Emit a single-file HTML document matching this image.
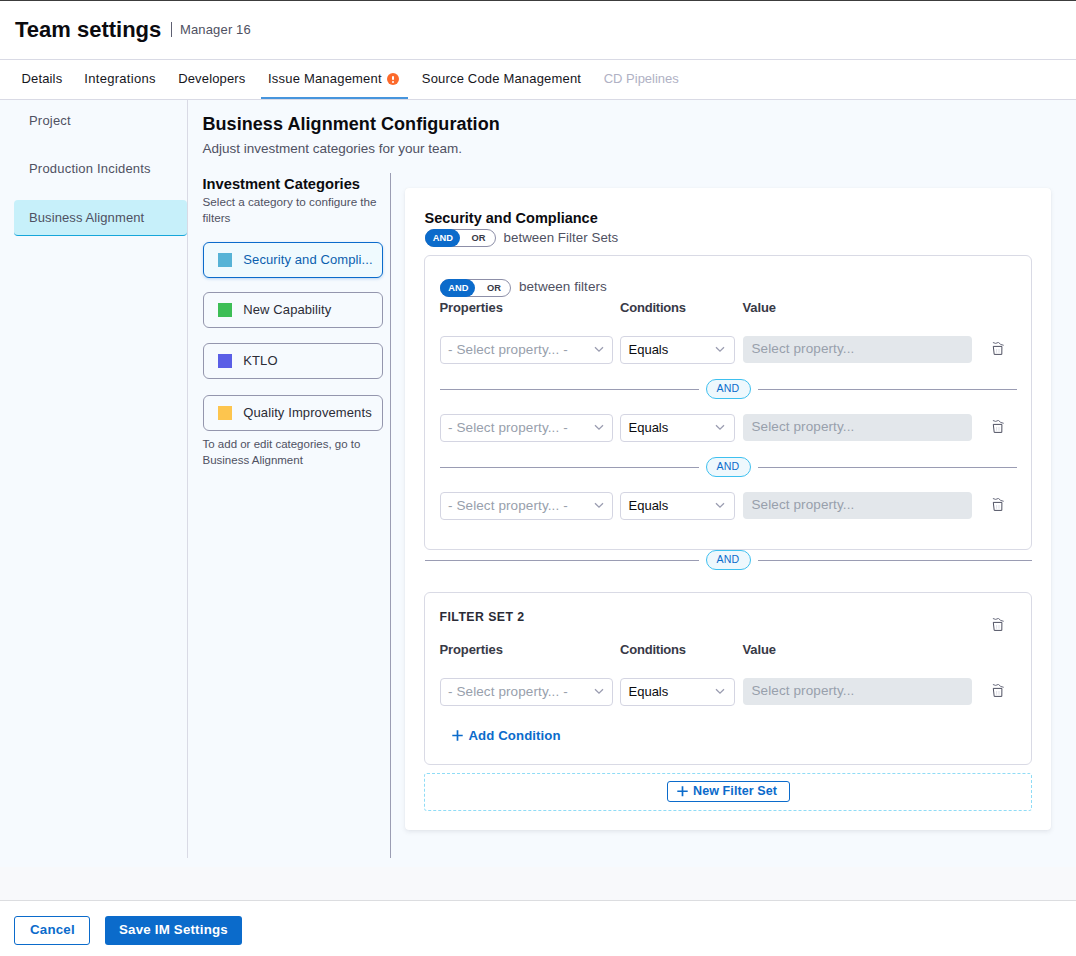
<!DOCTYPE html>
<html><head><meta charset="utf-8"><title>Team settings</title>
<style>
html,body{margin:0;padding:0;background:#fff;}
body{width:1076px;height:956px;position:relative;overflow:hidden;font-family:"Liberation Sans",sans-serif;}
body>div,body>svg{position:absolute;box-sizing:content-box;}
.t{white-space:nowrap;}
</style></head><body>
<div style="left:0px;top:0px;width:1076px;height:1px;background:#3c3c3c"></div>
<div class="t" style="left:15px;top:14.88px;font-size:22px;line-height:29px;color:#0b0b0f;font-weight:700;letter-spacing:0px;">Team settings</div>
<div style="left:171px;top:22px;width:1px;height:15px;background:#5e6072"></div>
<div class="t" style="left:180px;top:21.00px;font-size:13px;line-height:17px;color:#4f5162;font-weight:400;letter-spacing:0.15px;">Manager 16</div>
<div style="left:0px;top:59px;width:1076px;height:1px;background:#d9dae5"></div>
<div class="t" style="left:21.5px;top:69.60px;font-size:13px;line-height:17px;color:#16161c;font-weight:400;letter-spacing:0.15px;">Details</div>
<div class="t" style="left:84.3px;top:69.60px;font-size:13px;line-height:17px;color:#16161c;font-weight:400;letter-spacing:0.3px;">Integrations</div>
<div class="t" style="left:178.2px;top:69.60px;font-size:13px;line-height:17px;color:#16161c;font-weight:400;letter-spacing:0.15px;">Developers</div>
<div class="t" style="left:268px;top:69.60px;font-size:13px;line-height:17px;color:#16161c;font-weight:400;letter-spacing:0.2px;">Issue Management</div>
<div class="t" style="left:421.8px;top:69.60px;font-size:13px;line-height:17px;color:#16161c;font-weight:400;letter-spacing:0.18px;">Source Code Management</div>
<div class="t" style="left:603.7px;top:69.60px;font-size:13px;line-height:17px;color:#b0b1c4;font-weight:400;letter-spacing:0px;">CD Pipelines</div>
<div style="left:387px;top:73px;width:12px;height:12px;border-radius:50%;background:#fc6a2c"></div>
<div style="left:392.3px;top:75.5px;width:1.5px;height:4.6px;background:#fff;border-radius:1px"></div>
<div style="left:392.3px;top:81.2px;width:1.5px;height:1.5px;background:#fff;border-radius:1px"></div>
<div style="left:261px;top:97px;width:147px;height:2px;background:#4795dd"></div>
<div style="left:0px;top:99px;width:1076px;height:1px;background:#d9dae5"></div>
<div style="left:0px;top:100px;width:1076px;height:767px;background:#f6fafe"></div>
<div style="left:0px;top:867px;width:1076px;height:33px;background:#f8f9fb"></div>
<div style="left:187px;top:100px;width:1px;height:758px;background:#d9dae5"></div>
<div style="left:0px;top:900px;width:1076px;height:1px;background:#dcdde0"></div>
<div class="t" style="left:29px;top:112.10px;font-size:13px;line-height:17px;color:#4f5162;font-weight:400;letter-spacing:0.2px;">Project</div>
<div class="t" style="left:29px;top:160.00px;font-size:13px;line-height:17px;color:#4f5162;font-weight:400;letter-spacing:0.2px;">Production Incidents</div>
<div style="left:14px;top:200px;width:173px;height:34.5px;background:#c7f0fa;border-radius:4px;border-bottom:1.5px solid #17a6da"></div>
<div class="t" style="left:29px;top:209.30px;font-size:13px;line-height:17px;color:#4f5162;font-weight:400;letter-spacing:0.1px;">Business Alignment</div>
<div class="t" style="left:202.5px;top:112.66px;font-size:18px;line-height:23px;color:#0b0b0f;font-weight:700;letter-spacing:0.06px;">Business Alignment Configuration</div>
<div class="t" style="left:202.5px;top:139.72px;font-size:13.5px;line-height:18px;color:#4f5162;font-weight:400;letter-spacing:0.0px;">Adjust investment categories for your team.</div>
<div class="t" style="left:202.5px;top:174.51px;font-size:14.7px;line-height:19px;color:#0b0b0f;font-weight:700;letter-spacing:0px;">Investment Categories</div>
<div class="t" style="left:202.5px;top:194.45px;font-size:11.7px;line-height:15px;color:#4f5162;font-weight:400;letter-spacing:0px;">Select a category to configure the</div>
<div class="t" style="left:202.5px;top:210.45px;font-size:11.7px;line-height:15px;color:#4f5162;font-weight:400;letter-spacing:0px;">filters</div>
<div style="left:390px;top:173px;width:1px;height:685px;background:#9b9db3"></div>
<div style="left:203px;top:242px;width:178px;height:34px;border:1px solid #0b6bcb;border-radius:6px;background:#effafe;box-shadow:0 1px 3px rgba(11,107,203,0.25)"></div>
<div style="left:218px;top:253px;width:14px;height:14px;background:#56b3d6"></div>
<div class="t" style="left:243.3px;top:251.00px;font-size:13px;line-height:17px;color:#0b5fae;font-weight:400;letter-spacing:0.1px;">Security and Compli...</div>
<div style="left:203px;top:292px;width:178px;height:34px;border:1px solid #9496ad;border-radius:6px;background:#f6fafe"></div>
<div style="left:218px;top:303px;width:14px;height:14px;background:#3dbe56"></div>
<div class="t" style="left:243.3px;top:301.00px;font-size:13px;line-height:17px;color:#2b2c36;font-weight:400;letter-spacing:0.1px;">New Capability</div>
<div style="left:203px;top:343px;width:178px;height:34px;border:1px solid #9496ad;border-radius:6px;background:#f6fafe"></div>
<div style="left:218px;top:354px;width:14px;height:14px;background:#5a5ee6"></div>
<div class="t" style="left:243.3px;top:352.00px;font-size:13px;line-height:17px;color:#2b2c36;font-weight:400;letter-spacing:0.1px;">KTLO</div>
<div style="left:203px;top:394.5px;width:178px;height:34px;border:1px solid #9496ad;border-radius:6px;background:#f6fafe"></div>
<div style="left:218px;top:405.5px;width:14px;height:14px;background:#fdc54e"></div>
<div class="t" style="left:243.3px;top:403.50px;font-size:13px;line-height:17px;color:#2b2c36;font-weight:400;letter-spacing:0.1px;">Quality Improvements</div>
<div class="t" style="left:202.5px;top:436.72px;font-size:11.5px;line-height:15px;color:#4f5162;font-weight:400;letter-spacing:0px;">To add or edit categories, go to</div>
<div class="t" style="left:202.5px;top:452.72px;font-size:11.5px;line-height:15px;color:#4f5162;font-weight:400;letter-spacing:0px;">Business Alignment</div>
<div style="left:405px;top:188px;width:646px;height:642px;background:#fff;border-radius:4px;box-shadow:0 0 1px rgba(40,41,61,0.08),0 2px 4px rgba(96,97,112,0.12)"></div>
<div class="t" style="left:424.5px;top:208.98px;font-size:14.5px;line-height:19px;color:#0b0b0f;font-weight:700;letter-spacing:0px;">Security and Compliance</div>
<div style="left:424.5px;top:229px;width:69px;height:16px;border:1px solid #8d8fa8;border-radius:9px;background:#fff"></div>
<div style="left:424.5px;top:229px;width:35px;height:18px;border-radius:9px;background:#0b6bcb"></div>
<div class="t" style="left:432.8px;top:231.58px;font-size:9.3px;line-height:12px;color:#fff;font-weight:700;letter-spacing:0px;">AND</div>
<div class="t" style="left:471.5px;top:231.58px;font-size:9.3px;line-height:12px;color:#383946;font-weight:700;letter-spacing:0px;">OR</div>
<div class="t" style="left:503.5px;top:228.89px;font-size:13.3px;line-height:17px;color:#4f5162;font-weight:400;letter-spacing:0.05px;">between Filter Sets</div>
<div style="left:424px;top:255px;width:606px;height:293px;border:1px solid #d9dae5;border-radius:6px"></div>
<div style="left:440px;top:279px;width:69px;height:16px;border:1px solid #8d8fa8;border-radius:9px;background:#fff"></div>
<div style="left:440px;top:279px;width:35px;height:18px;border-radius:9px;background:#0b6bcb"></div>
<div class="t" style="left:448.3px;top:281.58px;font-size:9.3px;line-height:12px;color:#fff;font-weight:700;letter-spacing:0px;">AND</div>
<div class="t" style="left:487px;top:281.58px;font-size:9.3px;line-height:12px;color:#383946;font-weight:700;letter-spacing:0px;">OR</div>
<div class="t" style="left:519px;top:278.32px;font-size:13.5px;line-height:18px;color:#4f5162;font-weight:400;letter-spacing:0.05px;">between filters</div>
<div class="t" style="left:439.5px;top:299.20px;font-size:13px;line-height:17px;color:#383946;font-weight:700;letter-spacing:-0.1px;">Properties</div>
<div class="t" style="left:620px;top:299.20px;font-size:13px;line-height:17px;color:#383946;font-weight:700;letter-spacing:-0.2px;">Conditions</div>
<div class="t" style="left:742.5px;top:299.20px;font-size:13px;line-height:17px;color:#383946;font-weight:700;letter-spacing:-0.1px;">Value</div>
<div style="left:440px;top:336px;width:170.5px;height:25.5px;border:1px solid #d4d5e2;border-radius:4px;background:#fff"></div>
<div class="t" style="left:448px;top:340.62px;font-size:13.5px;line-height:18px;color:#98a0ac;font-weight:400;letter-spacing:0.1px;">- Select property... -</div>
<svg style="left:594.2px;top:346.2px" width="10" height="7" viewBox="0 0 10 7"><path d="M1 1.2 L5 5.2 L9 1.2" fill="none" stroke="#9a9cb0" stroke-width="1.3"/></svg>
<div style="left:620.3px;top:336px;width:113px;height:25.5px;border:1px solid #d4d5e2;border-radius:4px;background:#fff"></div>
<div class="t" style="left:628.5px;top:341.30px;font-size:13px;line-height:17px;color:#0b0b0f;font-weight:400;letter-spacing:0px;">Equals</div>
<svg style="left:715.2px;top:346.2px" width="10" height="7" viewBox="0 0 10 7"><path d="M1 1.2 L5 5.2 L9 1.2" fill="none" stroke="#9a9cb0" stroke-width="1.3"/></svg>
<div style="left:743px;top:336px;width:229px;height:27px;border-radius:4px;background:#e3e7eb"></div>
<div class="t" style="left:751.5px;top:340.32px;font-size:13.5px;line-height:18px;color:#98a0ac;font-weight:400;letter-spacing:0.1px;">Select property...</div>
<svg style="left:992px;top:341.5px" width="14" height="14" viewBox="0 0 14 14"><path d="M0.9 0.5 L3.7 1.4 L6.4 0.4 L8.7 2.4 L11.7 3.3" fill="none" stroke="#5a5c70" stroke-width="0.9" stroke-linejoin="round"/><path d="M1.2 4.4 H10.2 M1.3 4.4 L2.2 12.4 H9.8 L9.9 4.9" fill="none" stroke="#4f5162" stroke-width="1"/><path d="M4.6 7 V10.8 M7 7 V10.8" stroke="#d5d7e0" stroke-width="0.8"/></svg>
<div style="left:440px;top:389px;width:259px;height:1px;background:#9a9cb3"></div>
<div style="left:757.5px;top:389px;width:259.5px;height:1px;background:#9a9cb3"></div>
<div style="left:706px;top:379px;width:43px;height:18px;border:1px solid #3ec0ef;border-radius:10px;background:#eef8fd"></div>
<div class="t" style="left:716.6px;top:381.03px;font-size:10.6px;line-height:14px;color:#0b6bcb;font-weight:400;letter-spacing:0.1px;">AND</div>
<div style="left:440px;top:414px;width:170.5px;height:25.5px;border:1px solid #d4d5e2;border-radius:4px;background:#fff"></div>
<div class="t" style="left:448px;top:418.62px;font-size:13.5px;line-height:18px;color:#98a0ac;font-weight:400;letter-spacing:0.1px;">- Select property... -</div>
<svg style="left:594.2px;top:424.2px" width="10" height="7" viewBox="0 0 10 7"><path d="M1 1.2 L5 5.2 L9 1.2" fill="none" stroke="#9a9cb0" stroke-width="1.3"/></svg>
<div style="left:620.3px;top:414px;width:113px;height:25.5px;border:1px solid #d4d5e2;border-radius:4px;background:#fff"></div>
<div class="t" style="left:628.5px;top:419.30px;font-size:13px;line-height:17px;color:#0b0b0f;font-weight:400;letter-spacing:0px;">Equals</div>
<svg style="left:715.2px;top:424.2px" width="10" height="7" viewBox="0 0 10 7"><path d="M1 1.2 L5 5.2 L9 1.2" fill="none" stroke="#9a9cb0" stroke-width="1.3"/></svg>
<div style="left:743px;top:414px;width:229px;height:27px;border-radius:4px;background:#e3e7eb"></div>
<div class="t" style="left:751.5px;top:418.32px;font-size:13.5px;line-height:18px;color:#98a0ac;font-weight:400;letter-spacing:0.1px;">Select property...</div>
<svg style="left:992px;top:419.5px" width="14" height="14" viewBox="0 0 14 14"><path d="M0.9 0.5 L3.7 1.4 L6.4 0.4 L8.7 2.4 L11.7 3.3" fill="none" stroke="#5a5c70" stroke-width="0.9" stroke-linejoin="round"/><path d="M1.2 4.4 H10.2 M1.3 4.4 L2.2 12.4 H9.8 L9.9 4.9" fill="none" stroke="#4f5162" stroke-width="1"/><path d="M4.6 7 V10.8 M7 7 V10.8" stroke="#d5d7e0" stroke-width="0.8"/></svg>
<div style="left:440px;top:467px;width:259px;height:1px;background:#9a9cb3"></div>
<div style="left:757.5px;top:467px;width:259.5px;height:1px;background:#9a9cb3"></div>
<div style="left:706px;top:457px;width:43px;height:18px;border:1px solid #3ec0ef;border-radius:10px;background:#eef8fd"></div>
<div class="t" style="left:716.6px;top:459.03px;font-size:10.6px;line-height:14px;color:#0b6bcb;font-weight:400;letter-spacing:0.1px;">AND</div>
<div style="left:440px;top:492px;width:170.5px;height:25.5px;border:1px solid #d4d5e2;border-radius:4px;background:#fff"></div>
<div class="t" style="left:448px;top:496.62px;font-size:13.5px;line-height:18px;color:#98a0ac;font-weight:400;letter-spacing:0.1px;">- Select property... -</div>
<svg style="left:594.2px;top:502.2px" width="10" height="7" viewBox="0 0 10 7"><path d="M1 1.2 L5 5.2 L9 1.2" fill="none" stroke="#9a9cb0" stroke-width="1.3"/></svg>
<div style="left:620.3px;top:492px;width:113px;height:25.5px;border:1px solid #d4d5e2;border-radius:4px;background:#fff"></div>
<div class="t" style="left:628.5px;top:497.30px;font-size:13px;line-height:17px;color:#0b0b0f;font-weight:400;letter-spacing:0px;">Equals</div>
<svg style="left:715.2px;top:502.2px" width="10" height="7" viewBox="0 0 10 7"><path d="M1 1.2 L5 5.2 L9 1.2" fill="none" stroke="#9a9cb0" stroke-width="1.3"/></svg>
<div style="left:743px;top:492px;width:229px;height:27px;border-radius:4px;background:#e3e7eb"></div>
<div class="t" style="left:751.5px;top:496.32px;font-size:13.5px;line-height:18px;color:#98a0ac;font-weight:400;letter-spacing:0.1px;">Select property...</div>
<svg style="left:992px;top:497.5px" width="14" height="14" viewBox="0 0 14 14"><path d="M0.9 0.5 L3.7 1.4 L6.4 0.4 L8.7 2.4 L11.7 3.3" fill="none" stroke="#5a5c70" stroke-width="0.9" stroke-linejoin="round"/><path d="M1.2 4.4 H10.2 M1.3 4.4 L2.2 12.4 H9.8 L9.9 4.9" fill="none" stroke="#4f5162" stroke-width="1"/><path d="M4.6 7 V10.8 M7 7 V10.8" stroke="#d5d7e0" stroke-width="0.8"/></svg>
<div style="left:424.5px;top:560px;width:274.5px;height:1px;background:#9a9cb3"></div>
<div style="left:757.5px;top:560px;width:274.5px;height:1px;background:#9a9cb3"></div>
<div style="left:706px;top:550px;width:43px;height:18px;border:1px solid #3ec0ef;border-radius:10px;background:#eef8fd"></div>
<div class="t" style="left:716.6px;top:552.03px;font-size:10.6px;line-height:14px;color:#0b6bcb;font-weight:400;letter-spacing:0.1px;">AND</div>
<div style="left:424px;top:592px;width:606px;height:170.5px;border:1px solid #d9dae5;border-radius:6px"></div>
<div class="t" style="left:439.5px;top:608.74px;font-size:12.3px;line-height:16px;color:#2a2b36;font-weight:700;letter-spacing:0.45px;">FILTER SET 2</div>
<svg style="left:992px;top:618px" width="14" height="14" viewBox="0 0 14 14"><path d="M0.9 0.5 L3.7 1.4 L6.4 0.4 L8.7 2.4 L11.7 3.3" fill="none" stroke="#5a5c70" stroke-width="0.9" stroke-linejoin="round"/><path d="M1.2 4.4 H10.2 M1.3 4.4 L2.2 12.4 H9.8 L9.9 4.9" fill="none" stroke="#4f5162" stroke-width="1"/><path d="M4.6 7 V10.8 M7 7 V10.8" stroke="#d5d7e0" stroke-width="0.8"/></svg>
<div class="t" style="left:439.5px;top:641.30px;font-size:13px;line-height:17px;color:#383946;font-weight:700;letter-spacing:-0.1px;">Properties</div>
<div class="t" style="left:620px;top:641.30px;font-size:13px;line-height:17px;color:#383946;font-weight:700;letter-spacing:-0.2px;">Conditions</div>
<div class="t" style="left:742.5px;top:641.30px;font-size:13px;line-height:17px;color:#383946;font-weight:700;letter-spacing:-0.1px;">Value</div>
<div style="left:440px;top:678px;width:170.5px;height:25.5px;border:1px solid #d4d5e2;border-radius:4px;background:#fff"></div>
<div class="t" style="left:448px;top:682.62px;font-size:13.5px;line-height:18px;color:#98a0ac;font-weight:400;letter-spacing:0.1px;">- Select property... -</div>
<svg style="left:594.2px;top:688.2px" width="10" height="7" viewBox="0 0 10 7"><path d="M1 1.2 L5 5.2 L9 1.2" fill="none" stroke="#9a9cb0" stroke-width="1.3"/></svg>
<div style="left:620.3px;top:678px;width:113px;height:25.5px;border:1px solid #d4d5e2;border-radius:4px;background:#fff"></div>
<div class="t" style="left:628.5px;top:683.30px;font-size:13px;line-height:17px;color:#0b0b0f;font-weight:400;letter-spacing:0px;">Equals</div>
<svg style="left:715.2px;top:688.2px" width="10" height="7" viewBox="0 0 10 7"><path d="M1 1.2 L5 5.2 L9 1.2" fill="none" stroke="#9a9cb0" stroke-width="1.3"/></svg>
<div style="left:743px;top:678px;width:229px;height:27px;border-radius:4px;background:#e3e7eb"></div>
<div class="t" style="left:751.5px;top:682.32px;font-size:13.5px;line-height:18px;color:#98a0ac;font-weight:400;letter-spacing:0.1px;">Select property...</div>
<svg style="left:992px;top:683.5px" width="14" height="14" viewBox="0 0 14 14"><path d="M0.9 0.5 L3.7 1.4 L6.4 0.4 L8.7 2.4 L11.7 3.3" fill="none" stroke="#5a5c70" stroke-width="0.9" stroke-linejoin="round"/><path d="M1.2 4.4 H10.2 M1.3 4.4 L2.2 12.4 H9.8 L9.9 4.9" fill="none" stroke="#4f5162" stroke-width="1"/><path d="M4.6 7 V10.8 M7 7 V10.8" stroke="#d5d7e0" stroke-width="0.8"/></svg>
<svg style="left:451.5px;top:729.5px" width="11" height="11" viewBox="0 0 11 11"><path d="M5.5 0.3 V10.7 M0.3 5.5 H10.7" stroke="#0b6bcb" stroke-width="1.7"/></svg>
<div class="t" style="left:468.5px;top:727.13px;font-size:13.2px;line-height:17px;color:#0b6bcb;font-weight:700;letter-spacing:0.1px;">Add Condition</div>
<div style="left:424px;top:773px;width:606px;height:35.5px;border:1px dashed #8fdcf6;border-radius:3px"></div>
<div style="left:667px;top:781px;width:121px;height:19px;border:1px solid #0b6bcb;border-radius:3px;background:#fff"></div>
<svg style="left:676.5px;top:786px" width="11" height="10.5" viewBox="0 0 11 10.5"><path d="M5.5 0.2 V10.3 M0.3 5.25 H10.7" stroke="#0b6bcb" stroke-width="1.7"/></svg>
<div class="t" style="left:693px;top:782.97px;font-size:12.5px;line-height:16px;color:#0b6bcb;font-weight:700;letter-spacing:0.1px;">New Filter Set</div>
<div style="left:14px;top:916px;width:74px;height:26.5px;border:1px solid #0b6bcb;border-radius:3px;background:#fff"></div>
<div class="t" style="left:30px;top:921.09px;font-size:13.3px;line-height:17px;color:#0b6bcb;font-weight:700;letter-spacing:0.2px;">Cancel</div>
<div style="left:105px;top:916px;width:136.5px;height:28.5px;border-radius:3px;background:#0b6bcb"></div>
<div class="t" style="left:119px;top:921.09px;font-size:13.3px;line-height:17px;color:#fff;font-weight:700;letter-spacing:0.2px;">Save IM Settings</div>
</body></html>
